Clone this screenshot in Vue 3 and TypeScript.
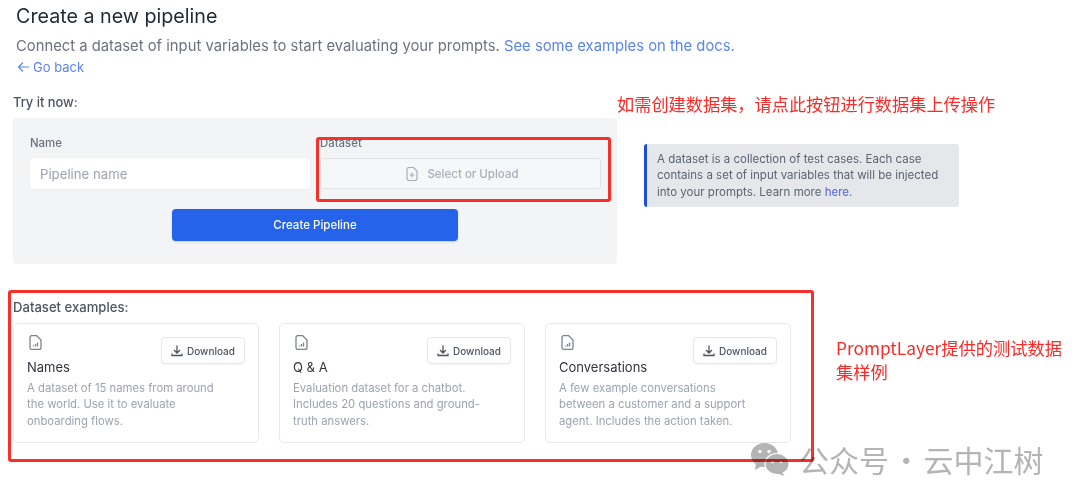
<script setup lang="ts">
interface Example {
  name: string;
  lines: string[];
}

const examples: Example[] = [
  { name: "Names", lines: ["A dataset of 15 names from around", "the world. Use it to evaluate", "onboarding flows."] },
  { name: "Q & A", lines: ["Evaluation dataset for a chatbot.", "Includes 20 questions and ground-", "truth answers."] },
  { name: "Conversations", lines: ["A few example conversations", "between a customer and a support", "agent. Includes the action taken."] },
];
</script>

<template>
  <div class="page">
    <h1 class="title">Create a new pipeline</h1>
    <p class="subtitle">
      Connect a dataset of input variables to start evaluating your prompts.
      <a class="link">See some examples on the docs.</a>
    </p>
    <a class="back">
      <svg width="13" height="12" viewBox="0 0 13 12" fill="none" stroke="currentColor" stroke-width="1.1">
        <path d="M12 6H1.5M6 1.5 1.5 6 6 10.5" />
      </svg>
      Go back
    </a>

    <div class="try-label">Try it now:</div>
    <div class="try-row">
      <section class="panel">
        <div class="fields">
          <div class="field">
            <label class="field-label">Name</label>
            <div class="input">Pipeline name</div>
          </div>
          <div class="field">
            <label class="field-label dataset-label">Dataset</label>
            <div class="select">
              <svg width="12" height="14" viewBox="0 0 12 14" fill="none" stroke="currentColor" stroke-width="1.2">
                <path d="M1 2.5a2 2 0 0 1 2-2h4.5L11 4v7.5a2 2 0 0 1-2 2H3a2 2 0 0 1-2-2Z" />
                <path d="M6 5.5v5M3.5 8h5" />
              </svg>
              Select or Upload
            </div>
          </div>
        </div>
        <button class="create">Create Pipeline</button>
      </section>
      <aside class="info">
        A dataset is a collection of test cases. Each case contains a set of input variables that will be injected
        into your prompts. Learn more <a class="here">here</a>.
      </aside>
    </div>

    <div class="examples-label">Dataset examples:</div>
    <div class="cards">
      <article v-for="ex in examples" :key="ex.name" class="card">
        <div class="card-top">
          <div>
            <svg class="file-icon" width="13" height="15" viewBox="0 0 13 15" fill="none" stroke="currentColor" stroke-width="1.3">
              <path d="M1 2.5a2 2 0 0 1 2-2h4.5L12 5v7.5a2 2 0 0 1-2 2H3a2 2 0 0 1-2-2Z" />
              <path d="M4.5 11.5v-1M6.5 11.5v-2.5M8.5 11.5V7.5" />
            </svg>
            <h3 class="card-name">{{ ex.name }}</h3>
          </div>
          <button class="download">
            <svg width="12" height="12" viewBox="0 0 12 12" fill="none" stroke="currentColor" stroke-width="1.3">
              <path d="M6 .5v7M3 5l3 3 3-3M1 8.5v2h10v-2" />
            </svg>
            Download
          </button>
        </div>
        <p class="card-desc">
          <span v-for="line in ex.lines" :key="line" class="desc-line">{{ line }}</span>
        </p>
      </article>
    </div>

    <!-- annotations drawn over the screenshot -->
    <div class="mark mark-dataset"></div>
    <div class="mark mark-examples"></div>
    <div class="note note-top">如需创建数据集，请点此按钮进行数据集上传操作</div>
    <div class="note note-side">PromptLayer提供的测试数据<br />集样例</div>
    <div class="watermark">
      <svg width="40" height="34" viewBox="0 0 40 34">
        <ellipse cx="14.5" cy="13" rx="13.5" ry="12" fill="#b4b4b4" />
        <path d="M6 21l-1 7 7-4Z" fill="#b4b4b4" />
        <ellipse cx="27" cy="22" rx="12" ry="10.5" fill="#b4b4b4" stroke="#fff" stroke-width="1.2" />
        <path d="M32 30l2.5 4-7-2.5Z" fill="#b4b4b4" />
        <circle cx="10" cy="9.5" r="1.7" fill="#fff" />
        <circle cx="19" cy="9.5" r="1.7" fill="#fff" />
        <circle cx="22.5" cy="20" r="1.3" fill="#fff" />
        <circle cx="31" cy="20" r="1.3" fill="#fff" />
      </svg>
      <span>公众号 · 云中江树</span>
    </div>
  </div>
</template>

<style>
html,
body {
  background: #fff;
  overflow: hidden;
}
</style>

<style scoped>
.page {
  position: relative;
  box-sizing: border-box;
  width: 1080px;
  height: 503px;
  overflow: hidden;
  padding: 4px 13px 0;
  background: #fff;
  font-family: Inter, "Noto Sans CJK SC", sans-serif;
  color: #6b7280;
}

.title {
  margin: 0 0 0 3px;
  font-size: 19.7px;
  font-weight: 400;
  line-height: 25px;
  color: #1f2937;
}

.subtitle {
  margin: 7px 0 0 3px;
  font-size: 14.8px;
  line-height: 20px;
  color: #6b7280;
  white-space: nowrap;
}

.link,
.back {
  color: #5a84ee;
}

.back {
  display: flex;
  align-items: center;
  gap: 3px;
  margin: 2px 0 0 4px;
  font-size: 13px;
  line-height: 18px;
}

.try-label {
  margin-top: 18px;
  font-size: 12.9px;
  line-height: 18px;
  font-weight: 500;
  color: #4b5563;
}

.try-row {
  display: flex;
  align-items: flex-start;
  gap: 27px;
  margin-top: 6px;
}

.panel {
  box-sizing: border-box;
  width: 604px;
  height: 146px;
  padding: 16px 16px 0 17px;
  background: #f3f4f6;
  border-radius: 4px;
}

.fields {
  display: flex;
  gap: 10px;
}

.field {
  width: 281px;
}

.field:first-child {
  width: 280px;
}

.field-label {
  display: block;
  font-size: 11.4px;
  line-height: 18px;
  color: #6b7280;
  font-weight: 500;
}

.input,
.select {
  box-sizing: border-box;
  height: 31px;
  margin-top: 6px;
  border-radius: 3px;
  display: flex;
  align-items: center;
}

.input {
  padding-left: 10px;
  background: #fff;
  box-shadow: 0 0 0 1px #eceef1;
  font-size: 13.2px;
  color: #9ca3af;
}

.select {
  justify-content: center;
  gap: 9px;
  padding-left: 4px;
  background: #f6f7f9;
  border: 1px solid #dfe1e5;
  font-size: 11.5px;
  font-weight: 500;
  color: #a9aeb8;
}

.create {
  display: block;
  width: 286px;
  height: 32px;
  margin: 20px auto 0 142px;
  padding: 0;
  border: 0;
  border-radius: 4px;
  background: #2563eb;
  box-shadow: 0 1px 2px rgb(0 0 0 / 15%);
  color: #fff;
  font: 500 11.5px Inter, sans-serif;
}

.info {
  box-sizing: border-box;
  width: 315px;
  height: 63px;
  margin-top: 26px;
  padding: 7px 10px 0 10px;
  border-left: 3px solid #1d4ed8;
  border-radius: 3px;
  background: #e5e7eb;
  font-size: 11.5px;
  line-height: 16.4px;
  color: #5b6472;
}

.here {
  color: #5266d8;
}

.examples-label {
  margin-top: 34px;
  font-size: 13.1px;
  line-height: 18px;
  font-weight: 500;
  color: #4b5563;
}

.cards {
  display: flex;
  gap: 20px;
  margin-top: 7px;
}

.card {
  box-sizing: border-box;
  width: 246px;
  height: 120px;
  padding: 11px 13px 0 13px;
  border: 1px solid #e7e8eb;
  border-radius: 5px;
}

.card-top {
  display: flex;
  justify-content: space-between;
}

.file-icon {
  display: block;
  margin-left: 2px;
  color: #7b8391;
}

.card-name {
  margin: 8px 0 0;
  font-size: 13px;
  line-height: 18px;
  font-weight: 400;
  color: #30353f;
}

.download {
  display: flex;
  align-items: center;
  justify-content: center;
  gap: 4px;
  box-sizing: border-box;
  width: 84px;
  height: 27px;
  margin-top: 2px;
  padding: 0;
  border: 1px solid #e5e7eb;
  border-radius: 4px;
  background: #fff;
  box-shadow: 0 1px 1px rgb(0 0 0 / 4%);
  font: 500 10px Inter, sans-serif;
  color: #4b5563;
}

.card-desc {
  margin: 4px 0 0;
  font-size: 11.3px;
  line-height: 16.4px;
  color: #9ca3af;
}

.desc-line {
  display: block;
  white-space: nowrap;
}

/* over the screenshot */
.mark {
  position: absolute;
  box-sizing: border-box;
  border: 3px solid #f7302a;
  border-radius: 3px;
}

.mark-dataset {
  left: 316px;
  top: 137px;
  width: 295px;
  height: 65px;
}

.mark-examples {
  left: 8px;
  top: 290px;
  width: 806px;
  height: 172px;
}

.note {
  position: absolute;
  font-family: "Noto Sans CJK SC", sans-serif;
  font-size: 17.2px;
  color: #fb2a26;
  white-space: nowrap;
}

.note-top {
  left: 617px;
  top: 92px;
  line-height: 24px;
}

.note-side {
  left: 836px;
  top: 336px;
  line-height: 24px;
  font-size: 17.3px;
}

.watermark {
  position: absolute;
  left: 750px;
  top: 441px;
  display: flex;
  align-items: center;
  gap: 9px;
  font-family: "Noto Sans CJK SC", sans-serif;
  font-size: 30px;
  line-height: 36px;
  word-spacing: -4.5px;
  color: #b4b4b4;
  white-space: nowrap;
  mix-blend-mode: multiply;
}
</style>
